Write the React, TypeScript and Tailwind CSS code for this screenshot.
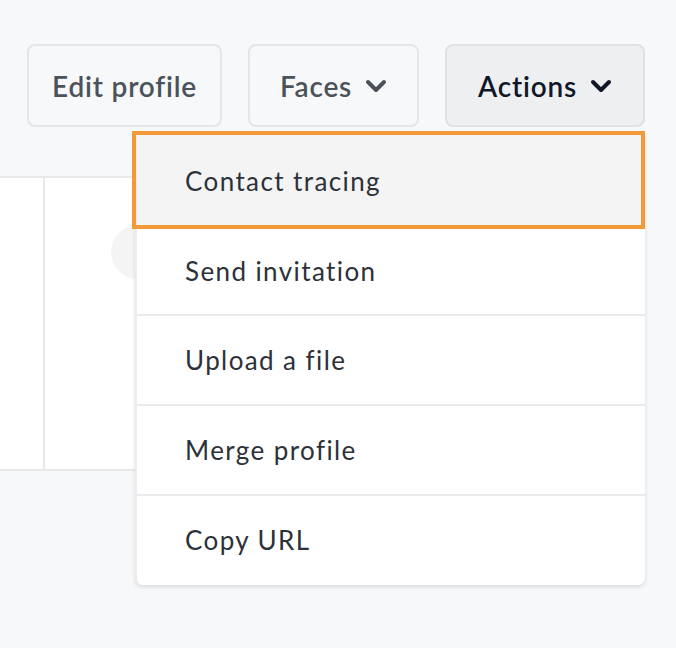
import React from "react";

function Chevron({ color }: { color: string }) {
  return (
    <svg width="22" height="16" viewBox="0 0 22 16" fill="none" className="ml-[13px]">
      <polyline points="3,4 11,12 19,4" stroke={color} strokeWidth="4" strokeLinecap="round" strokeLinejoin="round" />
    </svg>
  );
}

export default function App() {
  const itemText = "flex items-center pl-[48px] text-[26px] text-[#2d3138] tracking-[1.4px]";
  return (
    <div
      className="relative w-[676px] h-[648px] bg-[#f7f8fa] overflow-hidden"
      style={{ fontFamily: "Lato, 'Noto Sans', sans-serif" }}
    >
      <div className="flex justify-end gap-[26px] pt-[44px] pr-[31px]">
        <button className="h-[83px] w-[195px] rounded-[8px] border-2 border-[#e5e6e8] bg-[#f7f8fa] text-[28px] font-semibold text-[#4b5259] tracking-[0.8px]">
          Edit profile
        </button>
        <button className="h-[83px] w-[171px] rounded-[8px] border-2 border-[#e5e6e8] bg-[#f7f8fa] text-[28px] font-semibold text-[#4b5259] flex items-center justify-center tracking-[0.8px]">
          Faces
          <Chevron color="#4b5259" />
        </button>
        <button className="h-[83px] w-[200px] rounded-[8px] border-2 border-[#e0e1e4] bg-[#eeeff1] text-[28px] font-semibold text-[#101828] flex items-center justify-center tracking-[0.8px]">
          Actions
          <Chevron color="#101828" />
        </button>
      </div>

      <div className="mt-[49px] h-[295px] w-[645px] bg-white border-y-2 border-[#e9e9eb] flex">
        <div className="w-[45px] h-full border-r-2 border-[#e9e9eb]" />
        <div className="flex-1 pt-[47px] pl-[66px]">
          <div className="w-[54px] h-[54px] rounded-full bg-[#f4f4f5]" />
        </div>
      </div>

      <div className="absolute left-[135px] top-[133px] w-[510px] bg-white rounded-b-[7px] shadow-[0_2px_4px_rgba(0,0,0,0.12)] border-l-2 border-[#ececee]">
        <div className={"h-[96px] bg-[#f4f4f5] " + itemText}>Contact tracing</div>
        <div className={"h-[87px] border-b-2 border-[#ebebed] " + itemText}>Send invitation</div>
        <div className={"h-[90px] border-b-2 border-[#ebebed] " + itemText}>Upload a file</div>
        <div className={"h-[90px] border-b-2 border-[#ebebed] " + itemText}>Merge profile</div>
        <div className={"h-[89px] " + itemText}>Copy URL</div>
      </div>
      <div className="absolute left-[132px] top-[131px] w-[513px] h-[98px] border-4 border-[#f29a38] pointer-events-none" />
    </div>
  );
}
